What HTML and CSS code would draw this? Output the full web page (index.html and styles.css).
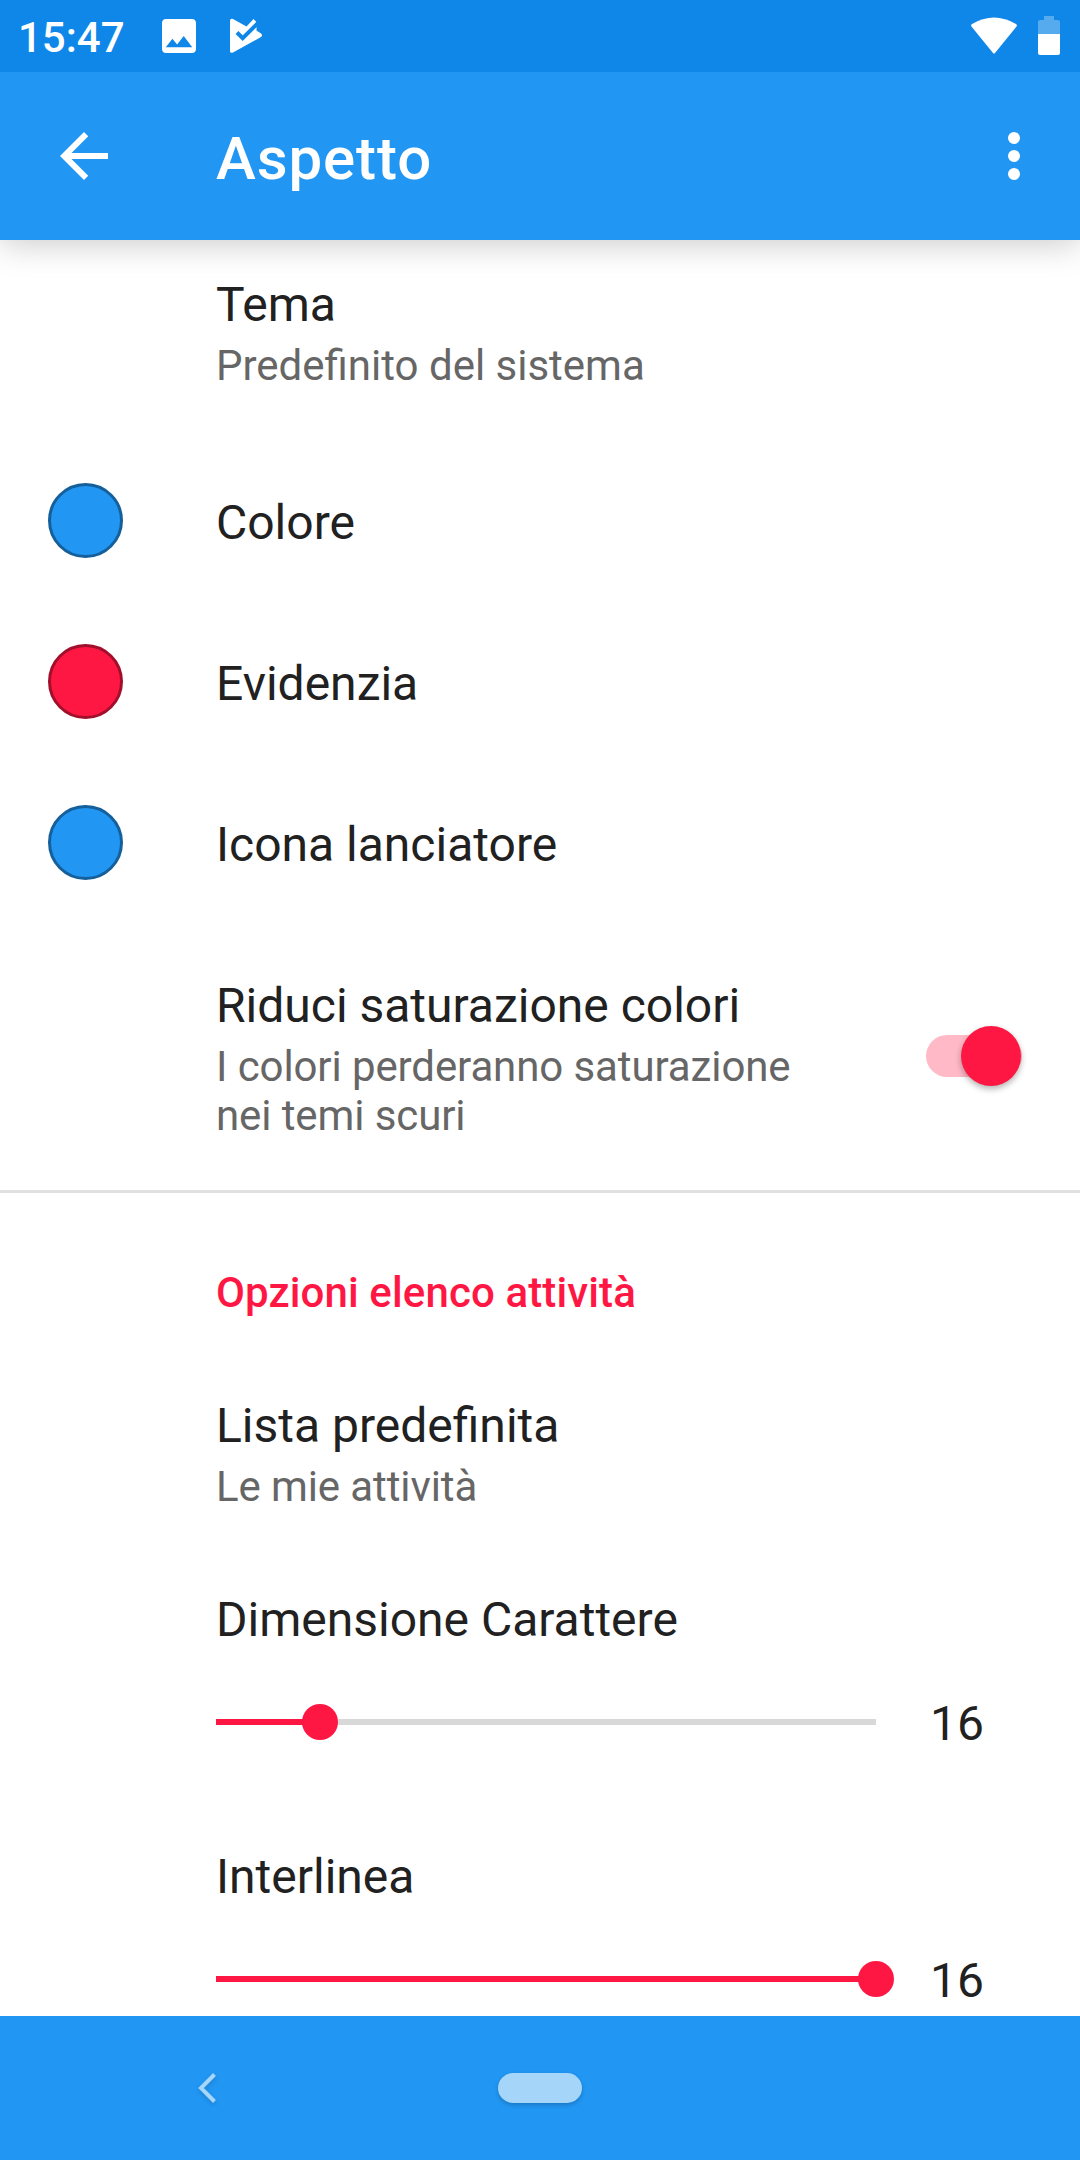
FILE: index.html
```html
<!DOCTYPE html>
<html lang="it">
<head>
<meta charset="utf-8">
<title>Aspetto</title>
<link rel="stylesheet" href="styles.css">
</head>
<body>
<div class="screen">
<header class="status">
  <span class="clock">15:47</span>
  <svg class="photo" viewBox="3 3 18 18"><path d="M21 19V5c0-1.100-.9-2-2-2H5c-1.100 0-2 .9-2 2v14c0 1.100.9 2 2 2h14c1.100 0 2-.9 2-2zM8.500 13.500l2.500 3.010L14.500 12l4.500 6H5l3.500-4.500z"/></svg>
  <svg class="play" viewBox="0 0 34 36"><path d="M4 1L17.500 8.500L24.500 1L27.500 4V12.500L32 15.500Q34 17 32 19L4 34.600Q1 35.500 1 33V3Q1 0 4 1Z"/><path class="tick" d="M8 14.500L13.700 20.200L29 5"/></svg>
  <svg class="wifi" viewBox="0 0 46 37"><path d="M1 7Q23-6 45 7Q46.500 8 45.500 9.500L24 36Q23 37 22 36L.5 9.500Q-.5 8 1 7Z"/></svg>
  <svg class="battery" viewBox="0 0 22 39"><path class="faded" d="M6 0h10v4h4q2 0 2 2v12H0V6q0-2 2-2h4z"/><path d="M0 18h22v19q0 2-2 2H2q-2 0-2-2z"/></svg>
</header>
<div class="toolbar">
  <svg class="back" viewBox="4 4 16 16"><path d="M20 11H7.830l5.590-5.590L12 4l-8 8 8 8 1.410-1.410L7.830 13H20v-2z"/></svg>
  <h1>Aspetto</h1>
  <svg class="more" viewBox="0 0 12 48"><circle cx="6" cy="6" r="6"/><circle cx="6" cy="24" r="6"/><circle cx="6" cy="42" r="6"/></svg>
</div>
<main>
  <section class="row theme"><div class="title">Tema</div><div class="summary">Predefinito del sistema</div></section>
  <section class="row color"><span class="dot blue"></span><div class="title">Colore</div></section>
  <section class="row color"><span class="dot red"></span><div class="title">Evidenzia</div></section>
  <section class="row color"><span class="dot blue"></span><div class="title">Icona lanciatore</div></section>
  <section class="row saturation"><div><div class="title">Riduci saturazione colori</div><div class="summary tight">I colori perderanno saturazione<br>nei temi scuri</div></div><span class="switch"><span class="knob"></span></span></section>
  <h2>Opzioni elenco attività</h2>
  <section class="row list"><div class="title">Lista predefinita</div><div class="summary tight">Le mie attività</div></section>
  <section class="row slider"><div class="title">Dimensione Carattere</div><div class="control"><span class="track"><span class="fill" style="width:15.700%"></span></span><span class="value">16</span></div></section>
  <section class="row slider"><div class="title">Interlinea</div><div class="control"><span class="track"><span class="fill" style="width:100%"></span></span><span class="value">16</span></div></section>
</main>
<nav><svg class="navback" viewBox="0 0 18 30"><path d="M16.500 1.500L3 15L16.500 28.500"/></svg><span class="home"></span></nav>
</div>
</body>
</html>
```
FILE: styles.css
```css
* { box-sizing: border-box; }
body { margin: 0; font-family: Roboto, sans-serif; color: #212121; background: #fff; }
.screen { width: 1080px; height: 2160px; display: flex; flex-direction: column; overflow: hidden; }
svg { display: block; fill: #fff; flex: none; }
.status { height: 72px; flex: none; background: #0e87e9; display: flex; align-items: center; padding: 0 20px 0 18px; }
.clock { color: #fff; font-size: 42px; font-weight: 500; line-height: 50px; width: 144px; padding-top: 3px; }
.photo { width: 34px; height: 34px; }
.play { width: 34px; height: 36px; margin-left: 33px; }
.tick { fill: none; stroke: #0e87e9; stroke-width: 4; }
.wifi { width: 46px; height: 37px; margin-left: auto; margin-top: -2px; }
.battery { width: 22px; height: 39px; margin-left: 21px; margin-top: -1px; }
.faded { opacity: .3; }
.toolbar { height: 168px; flex: none; background: #2196f3; display: flex; align-items: center; padding: 0 60px; box-shadow: 0 3px 32px rgba(0,0,0,.22); clip-path: inset(0 0 -40px 0); z-index: 1; }
.back { width: 48px; height: 48px; }
h1 { margin: 5px 0 0 108px; font-size: 60px; font-weight: 500; letter-spacing: .9px; color: #fff; line-height: 70px; }
.more { width: 12px; height: 48px; margin-left: auto; }
main { flex: 1; min-height: 0; overflow: hidden; }
.row { padding-left: 216px; }
.title { font-size: 48px; line-height: 57px; }
.summary { font-size: 42px; line-height: 49px; color: #666; margin-top: 8px; }
.tight { letter-spacing: -.1px; }
.theme { height: 200px; padding-top: 36px; }
.color { height: 161px; display: flex; align-items: center; padding-left: 48px; }
.color .title { padding-top: 3px; }
.dot { width: 75px; height: 75px; border-radius: 50%; margin-right: 93px; border: 3px solid; }
.blue { background: #2196f3; border-color: #155f9a; }
.red { background: #ff1744; border-color: #a10f2b; }
.saturation { height: 270px; padding-top: 54px; border-bottom: 3px solid #e0e0e0; display: flex; justify-content: space-between; padding-right: 58px; }
.switch { width: 96px; height: 42px; border-radius: 21px; background: #ffb9c7; margin-top: 58px; position: relative; }
.knob { position: absolute; right: 1px; top: -9px; width: 60px; height: 60px; border-radius: 50%; background: #ff1744; box-shadow: 0 3px 6px rgba(0,0,0,.3); }
h2 { margin: 75px 0 0 216px; font-size: 42px; line-height: 49px; font-weight: 500; letter-spacing: .12px; color: #ff1744; }
.list { height: 217px; padding-top: 80px; }
.slider { height: 257px; padding-top: 57px; }
.control { display: flex; align-items: center; height: 60px; margin-top: 44px; }
.track { width: 660px; height: 6px; background: #d8d8d8; }
.fill { display: block; height: 6px; background: #ff1744; position: relative; }
.fill::after { content: ""; position: absolute; right: -18px; top: -15px; width: 36px; height: 36px; border-radius: 50%; background: #ff1744; }
.value { width: 54px; margin-left: 54px; font-size: 48px; line-height: 57px; padding-top: 3px; }
nav { height: 144px; flex: none; background: #2196f3; display: flex; align-items: center; }
.navback { width: 18px; height: 30px; margin-left: 198px; fill: none; stroke: #a6d5fa; stroke-width: 4; overflow: visible; filter: drop-shadow(0 2px 2px rgba(0,0,0,.15)); }
.home { width: 84px; height: 30px; border-radius: 15px; margin-left: 282px; background: #a6d5fa; box-shadow: 0 2px 4px rgba(0,0,0,.2); }
```
